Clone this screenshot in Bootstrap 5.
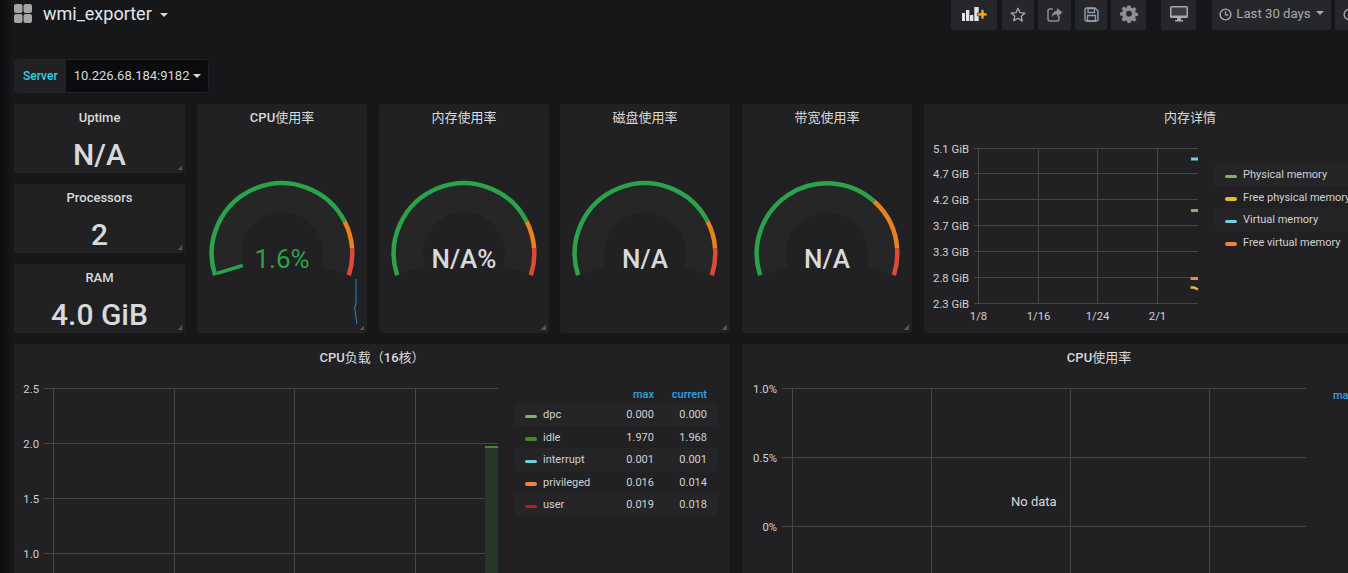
<!DOCTYPE html>
<html lang="zh-CN">
<head>
  <meta charset="UTF-8">
  <title>wmi_exporter - Grafana</title>
  <link href="https://cdn.jsdelivr.net/npm/bootstrap@5.3.2/dist/css/bootstrap.min.css" rel="stylesheet">
  <style>
    html, body { height: 573px; overflow: hidden; }
    body {
      background: linear-gradient(90deg, #0c0d0f 0, #161719 12px);
      color: #d8d9da;
      font-family: Roboto, "Noto Sans CJK SC", sans-serif;
      font-size: 11px;
    }
    svg text { font-family: Roboto, "Noto Sans CJK SC", sans-serif; }
    .dash-wrap { width: 1560px; padding-left: 14px; }
    .topbar { height: 27px; }
    .dash-title { font-size: 18px; line-height: 28px; color: #e3e6ea; margin-left: 11px; }
    .dash-caret { border: 4px solid transparent; border-top-color: #d8d9da; border-bottom: 0; margin-left: 8px; margin-top: 3px; }
    .tools { position: absolute; left: 951px; top: 0; gap: 4px; }
    .tool-btn { height: 30px; background: #26272a; border-radius: 0 0 2px 2px; padding-bottom: 2px; }
    .tool-btn svg { display: block; }
    .tb-add { width: 46px; margin-right: 1px; }
    .tb-sm { width: 32px; }
    .tb-share { width: 33px; }
    .tb-gear { width: 35px; }
    .tb-tv { width: 35px; margin-left: 11px; margin-right: 12px; }
    .tb-time { width: 119px; font-size: 13.2px; color: #a9aaac; }
    .tb-time .tcaret { border: 4.5px solid transparent; border-top-color: #a9aaac; border-bottom: 0; margin-left: 5px; margin-top: -3px; }
    .tb-next { width: 40px; }
    .var-row { height: 34px; margin-top: 32px; margin-bottom: 11px; width: 195px; border: 1px solid #1f2023; border-radius: 3px; }
    .var-label { width: 51px; background: #212124; color: #33d0e0; font-size: 12px; font-weight: 500; line-height: 32px; text-align: center; }
    .var-val { width: 143px; background: #0b0c0e; font-size: 13px; line-height: 32px; padding-left: 8px; color: #d8d9da; white-space: nowrap; }
    .var-val i { display: inline-block; border: 4.5px solid transparent; border-top-color: #d8d9da; border-bottom: 0; margin-left: 4px; vertical-align: 2px; }
    .panel-box { background: #212124; border-radius: 3px; position: relative; flex: none; }
    .panel-box.rz::after {
      content: ""; position: absolute; right: 3px; bottom: 3px; width: 5px; height: 5px;
      background: linear-gradient(135deg, transparent 50%, #555 50%);
    }
    .panel-ttl { position: relative; text-align: center; font-size: 13px; line-height: 20px; padding-top: 4px; color: #d8d9da; white-space: nowrap; }
    .panel-ttl b { font-weight: 500; }
    .row-one { height: 229px; gap: 12px; margin-bottom: 11px; }
    .stat-col { width: 171px; gap: 11px; flex: none; }
    .stat-box { height: 69px; width: 171px; }
    .stat-box .panel-ttl { font-weight: 500; }
    .stat-val { font-size: 30px; font-weight: 500; line-height: 36px; text-align: center; margin-top: 9px; }
    .gauge-box { width: 170px; height: 229px; }
    .gauge-box svg { display: block; }
    .gauge-shift { margin-left: -1px; }
    .mem-box { width: 532px; height: 229px; }
    .cpu-box { width: 716px; height: 260px; }
    .cpu2-box { width: 714px; height: 260px; }
    .row-two { gap: 12px; }
    .chart-abs { position: absolute; left: 0; top: 0; }
    .legend-list { position: absolute; }
    .legend-mem { left: 291px; top: 59px; width: 241px; }
    .legend-cpu { left: 501px; top: 43px; width: 202px; }
    .lg-row { height: 22.5px; white-space: nowrap; color: #d0d1d2; padding-left: 9.5px; padding-top: 2px; }
    .lg-row.alt { background: #252528; }
    .swatch { width: 12.5px; height: 3.5px; border-radius: 2px; margin-right: 6px; margin-top: 2px; flex: none; }
    .lg-num { width: 53px; text-align: right; flex: none; }
    .lg-name { width: 58px; flex: none; }
    .lg-end { width: 2px; flex: none; }
    .lg-head { color: #33a2e5; font-weight: 500; height: 17px; line-height: 17px; margin-top: -1px; }
    .no-data { position: absolute; left: 269px; top: 148px; font-size: 13px; color: #d8d9da; }
    .cut-max { position: absolute; left: 591px; top: 44px; color: #33a2e5; font-weight: 500; }
  </style>
</head>
<body>
<div class="dash-wrap">
  <div class="topbar d-flex align-items-center">
    <svg width="18" height="19" viewBox="0 0 18 19"><g fill="#a4a5a7"><rect width="8.5" height="9" rx="2"/><rect x="9.5" width="8.5" height="9" rx="2"/><rect y="10" width="8.5" height="9" rx="2"/><rect x="9.5" y="10" width="8.5" height="9" rx="2"/></g></svg>
    <span class="dash-title">wmi_exporter</span>
    <span class="dash-caret"></span>
  </div>

  <div class="tools d-flex">
    <div class="tool-btn tb-add d-flex align-items-center justify-content-center">
      <svg width="25" height="14" viewBox="0 0 25 14"><g fill="#e4e4e4"><rect x="0" y="6" width="3" height="8"/><rect x="4" y="3" width="3.3" height="11"/><rect x="8" y="8" width="3.3" height="6"/><rect x="12.3" y="0" width="4.4" height="14"/></g><path d="M19 2.700h3v3.200h3v3h-3V12h-3V8.900h-3.700v-3H19z" fill="#f4a522" stroke="#26272a" stroke-width=".6"/></svg>
    </div>
    <div class="tool-btn tb-sm d-flex align-items-center justify-content-center">
      <svg width="16" height="15" viewBox="0 0 16 15"><path d="M8 1.300l2 4.400 4.800.5-3.600 3.200 1 4.700L8 11.200 3.800 13.600l1-4.700L1.200 6.200 6 5.700z" fill="none" stroke="#a9aaac" stroke-width="1.300" stroke-linejoin="round"/></svg>
    </div>
    <div class="tool-btn tb-share d-flex align-items-center justify-content-center">
      <svg width="16" height="15" viewBox="0 0 16 15"><path d="M6 2H3a2 2 0 0 0-2 2v8a2 2 0 0 0 2 2h7a2 2 0 0 0 2-2V9" fill="none" stroke="#8e8f91" stroke-width="1.500"/><path d="M10 1l5.500 4.500L10 10V7.200C7.500 7.200 5.800 8 4.800 10.500 4.800 6.500 7 4 10 3.800z" fill="#8e8f91"/></svg>
    </div>
    <div class="tool-btn tb-sm d-flex align-items-center justify-content-center">
      <svg width="15" height="15" viewBox="0 0 15 15"><path d="M1 2.500A1.500 1.500 0 0 1 2.500 1h8.500L14 4v8.500a1.500 1.500 0 0 1-1.500 1.500h-10A1.500 1.500 0 0 1 1 12.500z" fill="none" stroke="#8fa0b0" stroke-width="1.400"/><path d="M4 1.500h6.500v4H4zM3.500 8.500h8V14h-8z" fill="none" stroke="#8fa0b0" stroke-width="1.300"/></svg>
    </div>
    <div class="tool-btn tb-gear d-flex align-items-center justify-content-center">
      <svg width="18" height="18" viewBox="0 0 18 18"><path fill="#8e8f91" fill-rule="evenodd" d="M7.300 0h3.400l.5 2.600 1.500.6 2.200-1.500 2.400 2.400-1.500 2.200.6 1.500 2.600.5v3.400l-2.600.5-.6 1.500 1.500 2.200-2.400 2.400-2.200-1.500-1.500.6-.5 2.600H7.300l-.5-2.600-1.500-.6-2.200 1.500L.7 15.300l1.500-2.200-.6-1.500L-1 11.100V7.700l2.600-.5.6-1.500L.7 3.500l2.400-2.400 2.200 1.500 1.500-.6zM9 6a3.200 3.200 0 1 0 0 6.400A3.200 3.200 0 0 0 9 6z" transform="translate(1 .5) scale(.89)"/></svg>
    </div>
    <div class="tool-btn tb-tv d-flex align-items-center justify-content-center">
      <svg width="18" height="16" viewBox="0 0 18 16"><path d="M1.500 1.500h15v8h-15z" fill="#3a3b3d"/><path d="M1.500 0h15A1.500 1.500 0 0 1 18 1.500v9a1.500 1.500 0 0 1-1.500 1.500H11v2h2v1.500H5V14h2v-2H1.500A1.500 1.500 0 0 1 0 10.500v-9A1.500 1.500 0 0 1 1.500 0zM1.500 1.500v8h15v-8z" fill="#a9aaac" fill-rule="evenodd"/></svg>
    </div>
    <div class="tool-btn tb-time d-flex align-items-center justify-content-center">
      <svg width="13" height="13" viewBox="0 0 13 13" class="me-1"><circle cx="6.500" cy="6.500" r="5.400" fill="none" stroke="#a9aaac" stroke-width="1.400"/><path d="M6.500 3v3.800h3" fill="none" stroke="#a9aaac" stroke-width="1.200"/></svg>
      <span>Last 30 days</span><span class="tcaret"></span>
    </div>
    <div class="tool-btn tb-next d-flex align-items-center ps-2">
      <svg width="13" height="13" viewBox="0 0 13 13"><circle cx="6.500" cy="6.500" r="5.400" fill="none" stroke="#a9aaac" stroke-width="1.400"/></svg>
    </div>
  </div>

  <div class="var-row d-flex overflow-hidden">
    <div class="var-label">Server</div>
    <div class="var-val">10.226.68.184:9182<i></i></div>
  </div>

  <div class="row-one d-flex">
    <div class="stat-col d-flex flex-column">
      <div class="panel-box rz stat-box"><div class="panel-ttl">Uptime</div><div class="stat-val">N/A</div></div>
      <div class="panel-box rz stat-box"><div class="panel-ttl">Processors</div><div class="stat-val">2</div></div>
      <div class="panel-box rz stat-box"><div class="panel-ttl">RAM</div><div class="stat-val">4.0 GiB</div></div>
    </div>
    <div class="panel-box rz gauge-box" data-title="&lt;b&gt;CPU&lt;/b&gt;使用率" data-val="1.6%" data-color="#2aa34a" data-weight="400" data-needle="1" data-a="27" data-b="4"></div>
    <div class="panel-box rz gauge-box" data-title="内存使用率" data-val="N/A%" data-color="#d8d9da" data-weight="500" data-a="27" data-b="4"></div>
    <div class="panel-box rz gauge-box gauge-shift" data-title="磁盘使用率" data-val="N/A" data-color="#d8d9da" data-weight="500" data-a="27" data-b="4"></div>
    <div class="panel-box rz gauge-box" data-title="带宽使用率" data-val="N/A" data-color="#d8d9da" data-weight="500" data-a="48" data-b="4"></div>
    <div class="panel-box mem-box">
      <svg class="chart-abs" width="532" height="229" id="memChart"></svg>
      <div class="panel-ttl">内存详情</div>
      <div class="legend-list legend-mem" id="memLegend"></div>
    </div>
  </div>

  <div class="row-two d-flex">
    <div class="panel-box cpu-box">
      <svg class="chart-abs" width="716" height="260" id="cpuChart"></svg>
      <div class="panel-ttl"><b>CPU</b>负载（<b>16</b>核）</div>
      <div class="legend-list legend-cpu" id="cpuLegend"></div>
    </div>
    <div class="panel-box cpu2-box">
      <svg class="chart-abs" width="714" height="260" id="cpu2Chart"></svg>
      <div class="panel-ttl"><b>CPU</b>使用率</div>
      <div class="no-data">No data</div>
      <div class="cut-max">max</div>
    </div>
  </div>
</div>

<script>
  const GRID = '#454547';

  function polar(cx, cy, r, deg) {
    const a = deg * Math.PI / 180;
    return [cx + r * Math.cos(a), cy - r * Math.sin(a)];
  }

  function arc(cx, cy, r, from, to) {
    const p1 = polar(cx, cy, r, from), p2 = polar(cx, cy, r, to);
    const large = Math.abs(from - to) > 180 ? 1 : 0;
    return `M${p1[0].toFixed(2)} ${p1[1].toFixed(2)}A${r} ${r} 0 ${large} 1 ${p2[0].toFixed(2)} ${p2[1].toFixed(2)}`;
  }

  document.querySelectorAll('.gauge-box').forEach(box => {
    const d = box.dataset, cx = 85, cy = 125.5;
    const start = 198, end = -18;
    const a = +d.a, b = +d.b;
    box.innerHTML = `
      <div class="panel-ttl">${d.title}</div>
      <svg width="170" height="205" viewBox="0 0 170 205">
        <path d="${arc(cx, cy, 54.5, start, end)}" fill="none" stroke="#262627" stroke-width="27"/>
        <path d="${arc(cx, cy, 70.3, start, a)}" fill="none" stroke="#2aa34a" stroke-width="4.5"/>
        <path d="${arc(cx, cy, 70.3, a, b)}" fill="none" stroke="#e8821e" stroke-width="4.5"/>
        <path d="${arc(cx, cy, 70.3, b, end)}" fill="none" stroke="#dc4b3a" stroke-width="4.5"/>
        ${d.needle ? `<path d="M${polar(cx, cy, 68, start - 1).map(n => n.toFixed(1)).join(' ')}L${polar(cx, cy, 41, start - 1).map(n => n.toFixed(1)).join(' ')}" stroke="#2aa34a" stroke-width="3.5"/>
        <path d="M159 151L159 175 157.700 180 160 196" fill="none" stroke="#2a84d6" stroke-width="1"/>` : ''}
        <text x="${cx}" y="140" text-anchor="middle" font-size="26" font-weight="${d.weight}" fill="${d.color}">${d.val}</text>
      </svg>`;
  });

  // grid lines + axis labels for a graph panel
  function drawChart(id, o) {
    let s = '';
    o.ys.forEach((y, i) => {
      s += `<line x1="${o.x0}" x2="${o.x1}" y1="${y}" y2="${y}" stroke="${GRID}"/>`;
      s += `<text x="${o.x0 - 5}" y="${y + 4}" text-anchor="end" font-size="11.3" fill="#d0d1d2">${o.yLabels[i]}</text>`;
    });
    o.xs.forEach((x, i) => {
      s += `<line x1="${x}" x2="${x}" y1="${o.ys[0]}" y2="${o.bottom}" stroke="${GRID}"/>`;
      if (o.xLabels) s += `<text x="${x}" y="${o.bottom + 17}" text-anchor="middle" font-size="11.3" fill="#d0d1d2">${o.xLabels[i]}</text>`;
    });
    document.getElementById(id).innerHTML = s + (o.extra || '');
  }

  drawChart('memChart', {
    x0: 50, x1: 274, bottom: 199,
    ys: [44.5, 69.5, 95.5, 121.5, 147.5, 173.5, 199.5],
    yLabels: ['5.1 GiB', '4.7 GiB', '4.2 GiB', '3.7 GiB', '3.3 GiB', '2.8 GiB', '2.3 GiB'],
    xs: [54.5, 114.5, 173.5, 233.5],
    xLabels: ['1/8', '1/16', '1/24', '2/1'],
    extra: `<rect x="267" y="53.5" width="7" height="3" fill="#64d3e8"/>
      <rect x="267" y="105" width="7" height="3" fill="#7eb26d"/>
      <rect x="266.5" y="173" width="7.5" height="3" fill="#ef843c"/>
      <path d="M266.5 183.500L270 183.500 274 185.500" fill="none" stroke="#eab839" stroke-width="2.500"/>`
  });

  drawChart('cpuChart', {
    x0: 30, x1: 484, bottom: 260,
    ys: [44.5, 99.5, 154.5, 209.5],
    yLabels: ['2.5', '2.0', '1.5', '1.0'],
    xs: [39.5, 160.5, 280.5, 401.5],
    extra: `<rect x="471" y="103" width="13" height="157" fill="#26382a"/>
      <rect x="471" y="102" width="13" height="2" fill="#3f8a2b"/>`
  });

  drawChart('cpu2Chart', {
    x0: 40, x1: 564, bottom: 260,
    ys: [44.5, 113.5, 182.5],
    yLabels: ['1.0%', '0.5%', '0%'],
    xs: [50.5, 189.5, 328.5, 467.5]
  });

  const memSeries = [
    ['Physical memory', '#7eb26d'],
    ['Free physical memory', '#eab839'],
    ['Virtual memory', '#6ed0e0'],
    ['Free virtual memory', '#ef843c']
  ];
  document.getElementById('memLegend').innerHTML = memSeries.map((m, i) => `
    <div class="lg-row d-flex align-items-center ${i % 2 === 0 ? 'alt' : ''}">
      <span class="swatch" style="background:${m[1]}"></span><span>${m[0]}</span>
    </div>`).join('');

  const cpuSeries = [
    ['dpc', '#7eb26d', '0.000', '0.000'],
    ['idle', '#3f8a2b', '1.970', '1.968'],
    ['interrupt', '#6ed0e0', '0.001', '0.001'],
    ['privileged', '#ef843c', '0.016', '0.014'],
    ['user', '#bf1b27', '0.019', '0.018']
  ];
  document.getElementById('cpuLegend').innerHTML = `
    <div class="lg-head d-flex justify-content-end pe-2"><span class="lg-num">max</span><span class="lg-num">current</span><span class="lg-end"></span></div>` +
    cpuSeries.map((c, i) => `
    <div class="lg-row d-flex align-items-center pe-2 ${i % 2 === 0 ? 'alt' : ''}">
      <span class="swatch" style="background:${c[1]}"></span><span class="lg-name">${c[0]}</span>
      <span class="ms-auto lg-num">${c[2]}</span><span class="lg-num">${c[3]}</span><span class="lg-end"></span>
    </div>`).join('');
</script>
<script src="https://cdn.jsdelivr.net/npm/bootstrap@5.3.2/dist/js/bootstrap.bundle.min.js"></script>
</body>
</html>
